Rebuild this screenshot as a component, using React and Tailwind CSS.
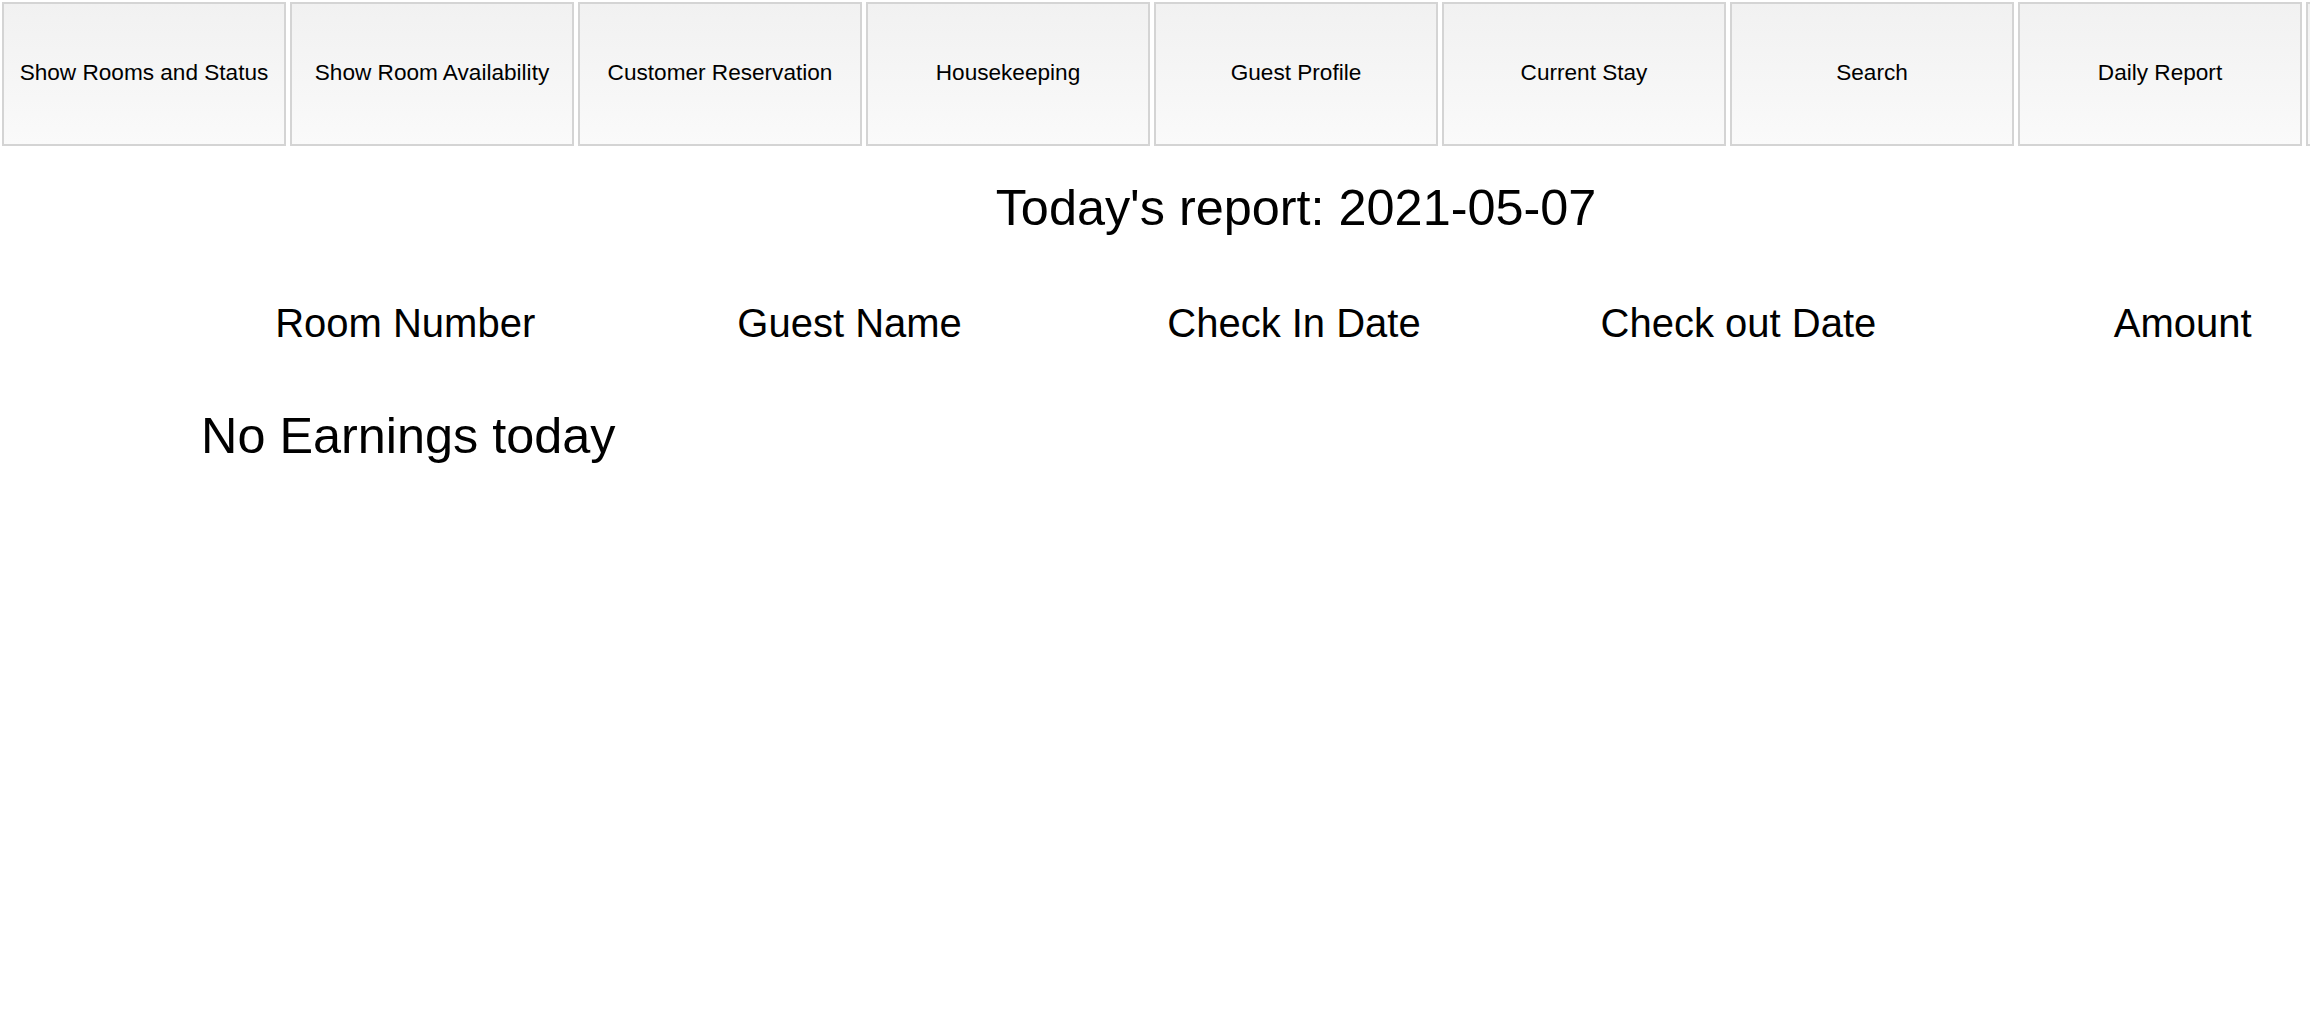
import React from "react";

const buttons = [
  "Show Rooms and Status",
  "Show Room Availability",
  "Customer Reservation",
  "Housekeeping",
  "Guest Profile",
  "Current Stay",
  "Search",
  "Daily Report",
  "",
];

const headers = ["Room Number", "Guest Name", "Check In Date", "Check out Date", "Amount"];

export default function App() {
  return (
    <div className="w-screen min-h-screen overflow-hidden bg-white text-black" style={{ fontFamily: '"Liberation Sans", Arial, sans-serif' }}>
      <div className="w-[2592px]">
        <div className="flex flex-nowrap">
          {buttons.map((b, i) => (
            <button
              key={i}
              className="shrink-0 w-[284px] h-[144px] m-[2px] pb-[3px] border-2 border-[#d4d4d4] bg-linear-to-b from-[#f1f1f1] to-[#fafafa] text-[22.6px] text-black flex items-center justify-center"
            >
              {b}
            </button>
          ))}
        </div>
        <h1 className="mt-[31px] text-center text-[50.4px] leading-[58px] font-normal">
          Today's report: 2021-05-07
        </h1>
        <div className="mt-[63px] ml-[183px] w-[2222px] grid grid-cols-5">
          {headers.map((h) => (
            <div key={h} className="text-center text-[40px] leading-[46px]">
              {h}
            </div>
          ))}
        </div>
        <div className="mt-[61px] ml-[201px] text-[50.4px] leading-[58px]">No Earnings today</div>
      </div>
    </div>
  );
}
